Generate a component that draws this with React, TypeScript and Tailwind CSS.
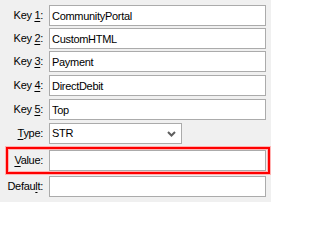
import React from "react";

const keys = ["CommunityPortal", "CustomHTML", "Payment", "DirectDebit", "Top"];

// label with one underlined (mnemonic) character
const Label = ({ pre, u, post }: { pre: string; u: string; post: string }) => (
    <span className="whitespace-nowrap">
        {pre}
        <span className="underline underline-offset-2">{u}</span>
        {post}
    </span>
);

const Field = ({ value }: { value?: string }) => (
    <input
        readOnly
        defaultValue={value}
        className="w-[217px] h-[21px] border border-[#ababab] bg-white pl-[2px] text-black outline-none"
    />
);

const App: React.FC = () => {
    return (
        <div
            className="w-[271px] h-[202px] bg-[#f0f0f0] pt-[5px] text-[11px] tracking-[-0.3px] text-black"
            style={{ fontFamily: '"Liberation Sans", Arial, sans-serif' }}
        >
            <div className="flex flex-col">
                {keys.map((k, i) => (
                    <div key={i} className={`flex items-center ${i === 0 ? "" : i < 3 ? "mt-[2px]" : "mt-[3px]"}`}>
                        <div className="w-[43px] text-right">
                            <Label pre="Key " u={String(i + 1)} post=":" />
                        </div>
                        <div className="ml-[6px]">
                            <Field value={k} />
                        </div>
                    </div>
                ))}

                <div className="flex items-center mt-[3px]">
                    <div className="w-[43px] text-right">
                        <Label pre="" u="T" post="ype:" />
                    </div>
                    <div className="ml-[6px] w-[133px] h-[21px] border border-[#ababab] bg-white pl-[2px] flex items-center justify-between">
                        <span>STR</span>
                        <svg width="9" height="6" viewBox="0 0 9 6" className="mr-[5px]">
                            <polyline points="1,1 4.5,4.5 8,1" fill="none" stroke="#5f5f5f" strokeWidth="2" />
                        </svg>
                    </div>
                </div>

                <div className="mt-[3px] ml-[6px] w-[264px] h-[27px] border-2 border-[#ff0000] shadow-[0_0_0_1px_#ffb3b3,inset_0_0_0_1px_#ffb3b3] flex items-center">
                    <div className="w-[35px] text-right">
                        <Label pre="" u="V" post="alue:" />
                    </div>
                    <div className="ml-[6px]">
                        <Field />
                    </div>
                </div>

                <div className="flex items-center mt-[2px]">
                    <div className="w-[43px] text-right">
                        <Label pre="Defau" u="l" post="t:" />
                    </div>
                    <div className="ml-[6px]">
                        <Field />
                    </div>
                </div>
            </div>
        </div>
    );
};

export default App;
